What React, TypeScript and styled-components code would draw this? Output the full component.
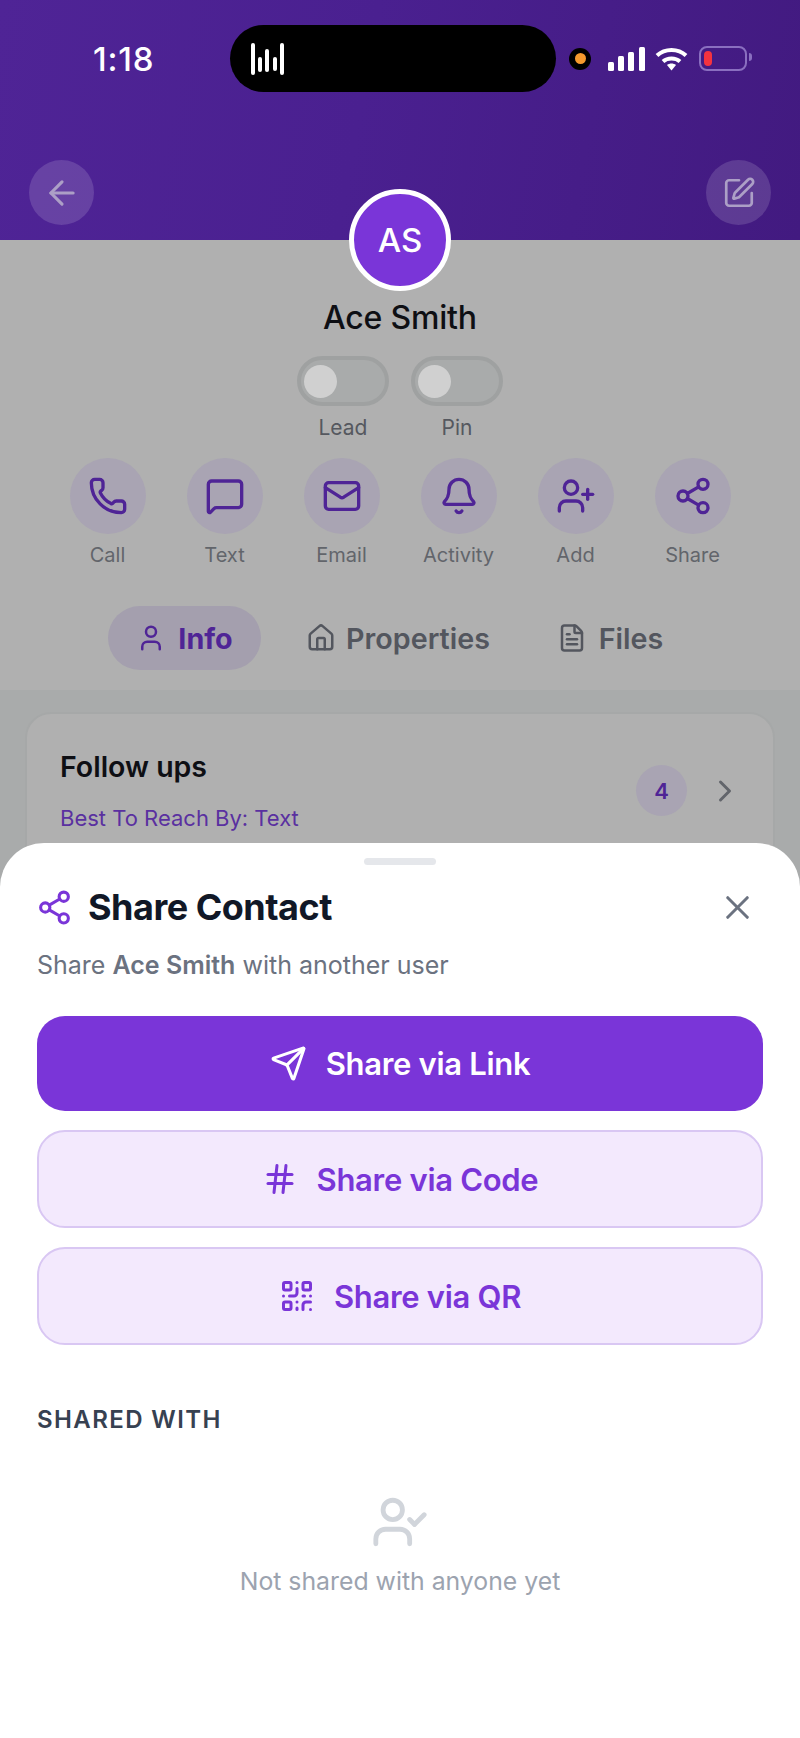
import React from 'react';
import styled, { createGlobalStyle } from 'styled-components';
import {
  ArrowLeft,
  Bell,
  ChevronRight,
  FileText,
  Hash,
  House,
  Mail,
  MessageSquare,
  Phone,
  QrCode,
  Send,
  Share2,
  SquarePen,
  User,
  UserCheck,
  UserPlus,
  X,
} from 'lucide-react';

const GlobalStyle = createGlobalStyle`
  html, body {
    margin: 0;
    padding: 0;
    background: #b0b0b0;
  }
  * {
    box-sizing: border-box;
  }
`;

const Page = styled.div`
  position: relative;
  width: 800px;
  height: 1738px;
  overflow: hidden;
  background: #a9abab;
  font-family: 'Inter', 'Liberation Sans', sans-serif;
`;

const Header = styled.header`
  height: 240px;
  padding: 25px 29px 0;
  background: linear-gradient(100deg, #4f2496 0%, #4a2090 45%, #421a80 100%);
`;

const StatusBar = styled.div`
  display: flex;
  align-items: center;
  height: 67px;
  color: #fff;
`;

const Clock = styled.span`
  width: 201px;
  padding-left: 64px;
  font-size: 33px;
  font-weight: 500;
  letter-spacing: 0.8px;
`;

const Island = styled.div`
  display: flex;
  align-items: center;
  width: 326px;
  height: 67px;
  padding-left: 21px;
  border-radius: 34px;
  background: #000;
`;

const PrivacyDot = styled.span`
  display: flex;
  align-items: center;
  justify-content: center;
  width: 22px;
  height: 22px;
  margin-left: 13px;
  border-radius: 50%;
  background: #000;

  &::after {
    content: '';
    width: 11px;
    height: 11px;
    border-radius: 50%;
    background: #f59a2e;
  }
`;

const SignalIcon = styled.svg`
  margin-left: 17px;
`;

const WifiIcon = styled.svg`
  margin-left: 10px;
`;

const Battery = styled.div`
  position: relative;
  width: 48px;
  height: 25px;
  margin-left: 11px;
  padding: 3px;
  border: 2px solid #8a6fc0;
  border-radius: 8px;

  &::before {
    content: '';
    display: block;
    width: 8px;
    height: 15px;
    border-radius: 4px;
    background: #f5333f;
  }

  &::after {
    content: '';
    position: absolute;
    top: 5px;
    right: -7px;
    width: 3px;
    height: 8px;
    border-radius: 0 3px 3px 0;
    background: #8a6fc0;
  }
`;

const HeaderActions = styled.div`
  display: flex;
  justify-content: space-between;
  margin-top: 68px;
`;

const RoundButton = styled.button`
  display: flex;
  align-items: center;
  justify-content: center;
  width: 65px;
  height: 65px;
  padding: 0;
  border: 0;
  border-radius: 50%;
  background: rgba(255, 255, 255, 0.14);
  color: #ac9fc6;
`;

const Profile = styled.section`
  display: flex;
  flex-direction: column;
  align-items: center;
  height: 452px;
  background: #b0b0b0;
  border-bottom: 2px solid #a9abab;
`;

const Avatar = styled.div`
  display: flex;
  align-items: center;
  justify-content: center;
  width: 102px;
  height: 102px;
  margin-top: -51px;
  border: 5px solid #fff;
  border-radius: 50%;
  background: #7a35d8;
  color: #fff;
  font-size: 33px;
  font-weight: 500;
`;

const Name = styled.h1`
  margin: 7px 0 0;
  font-size: 32px;
  line-height: 40px;
  font-weight: 500;
  letter-spacing: -0.2px;
  color: #0e0f14;
`;

const ToggleRow = styled.div`
  display: flex;
  gap: 22px;
  margin-top: 18px;
`;

const ToggleItem = styled.div`
  display: flex;
  flex-direction: column;
  align-items: center;
`;

const Toggle = styled.div`
  display: flex;
  align-items: center;
  width: 92px;
  height: 50px;
  padding-left: 3px;
  border: 4px solid #9fa1a1;
  border-radius: 25px;
  background: #a9abab;

  &::after {
    content: '';
    width: 33px;
    height: 33px;
    border-radius: 50%;
    background: #d0d0d0;
  }
`;

const ToggleLabel = styled.span`
  margin-top: 9px;
  font-size: 21px;
  line-height: 26px;
  color: #55585f;
`;

const ActionRow = styled.div`
  display: grid;
  grid-template-columns: repeat(6, 76px);
  column-gap: 41px;
  margin-top: 17px;
`;

const Action = styled.div`
  display: flex;
  flex-direction: column;
  align-items: center;
`;

const ActionCircle = styled.div`
  display: flex;
  align-items: center;
  justify-content: center;
  width: 76px;
  height: 76px;
  border-radius: 50%;
  background: #a9a4b3;
  color: #4f2496;
`;

const ActionLabel = styled.span`
  margin-top: 9px;
  font-size: 20px;
  line-height: 24px;
  color: #62656b;
`;

const Tabs = styled.nav`
  display: flex;
  align-items: center;
  align-self: flex-start;
  gap: 24px;
  margin: 39px 0 0 108px;
`;

const Tab = styled.div<{ $active?: boolean; $gap: number; $width: number }>`
  display: flex;
  align-items: center;
  justify-content: center;
  gap: ${({ $gap }) => $gap}px;
  width: ${({ $width }) => $width}px;
  height: 64px;
  border-radius: 32px;
  background: ${({ $active }) => ($active ? '#a49fae' : 'transparent')};
  color: ${({ $active }) => ($active ? '#4f2496' : '#53565e')};
  font-size: 28.7px;
  font-weight: ${({ $active }) => ($active ? 700 : 600)};
`;

const CardArea = styled.div`
  padding: 20px 25px 0;
`;

const Card = styled.article`
  display: flex;
  align-items: flex-start;
  justify-content: space-between;
  height: 200px;
  padding: 35px 30px 0 33px;
  border: 2px solid #a6a8a8;
  border-radius: 26px;
  background: #b0b0b0;
`;

const CardText = styled.div`
  display: flex;
  flex-direction: column;
`;

const CardTitle = styled.span`
  font-size: 28.5px;
  line-height: 36px;
  font-weight: 600;
  color: #0e0f14;
`;

const CardHint = styled.span`
  margin-top: 19px;
  font-size: 22px;
  line-height: 28px;
  color: #5a30a0;
`;

const CardMeta = styled.div`
  display: flex;
  align-items: center;
  gap: 20px;
  margin-top: 16px;
  color: #62656b;
`;

const CountBadge = styled.span`
  display: flex;
  align-items: center;
  justify-content: center;
  width: 51px;
  height: 51px;
  border-radius: 50%;
  background: #a9a4b3;
  color: #4f2496;
  font-size: 22px;
  font-weight: 600;
`;

const Sheet = styled.section`
  position: absolute;
  top: 843px;
  left: 0;
  right: 0;
  bottom: 0;
  padding: 15px 37px 0;
  border-radius: 44px 44px 0 0;
  background: #fff;
`;

const Handle = styled.div`
  width: 72px;
  height: 7px;
  margin: 0 auto;
  border-radius: 4px;
  background: #e5e7eb;
`;

const SheetHeader = styled.div`
  display: flex;
  align-items: center;
  margin-top: 20px;
  height: 44px;
`;

const SheetIcon = styled.span`
  display: flex;
  margin-left: -1px;
  color: #7a35d8;
`;

const SheetTitle = styled.h2`
  flex: 1;
  margin: 0 0 0 15px;
  font-size: 36px;
  font-weight: 700;
  letter-spacing: -0.5px;
  color: #111827;
`;

const CloseButton = styled.button`
  display: flex;
  margin-right: 6px;
  padding: 0;
  border: 0;
  background: none;
  color: #6b7280;
`;

const Subtitle = styled.p`
  margin: 19px 0 0;
  font-size: 25px;
  line-height: 34px;
  color: #6b7280;

  strong {
    font-weight: 600;
  }
`;

const ButtonStack = styled.div`
  display: flex;
  flex-direction: column;
  gap: 19px;
  margin-top: 34px;
`;

const ShareButton = styled.button<{ $primary?: boolean }>`
  display: flex;
  align-items: center;
  justify-content: center;
  gap: 19px;
  width: 100%;
  height: ${({ $primary }) => ($primary ? 95 : 98)}px;
  border: ${({ $primary }) => ($primary ? '0' : '2px solid #d9c7f3')};
  border-radius: 28px;
  background: ${({ $primary }) => ($primary ? '#7a35d8' : '#f3e9fd')};
  color: ${({ $primary }) => ($primary ? '#fff' : '#7a35d8')};
  font-family: inherit;
  font-size: 31px;
  font-weight: 600;
  letter-spacing: -0.3px;
`;

const SectionLabel = styled.h3`
  margin: 60px 0 0;
  font-size: 24px;
  line-height: 30px;
  font-weight: 600;
  letter-spacing: 1.4px;
  color: #374151;
`;

const EmptyState = styled.div`
  display: flex;
  flex-direction: column;
  align-items: center;
  margin-top: 58px;
  color: #d1d5db;
`;

const EmptyText = styled.span`
  margin-top: 14px;
  font-size: 24.8px;
  line-height: 32px;
  color: #9ca3af;
`;

const actions = [
  { label: 'Call', Icon: Phone },
  { label: 'Text', Icon: MessageSquare },
  { label: 'Email', Icon: Mail },
  { label: 'Activity', Icon: Bell },
  { label: 'Add', Icon: UserPlus },
  { label: 'Share', Icon: Share2 },
];

const App = () => (
  <Page>
    <GlobalStyle />
    <Header>
      <StatusBar>
        <Clock>1:18</Clock>
        <Island>
          <svg width="36" height="32" viewBox="0 0 36 32" fill="#fff">
            <rect x="0" y="0" width="4" height="32" rx="2" />
            <rect x="7" y="14" width="4" height="15" rx="2" />
            <rect x="14" y="6" width="4" height="23" rx="2" />
            <rect x="22" y="14" width="4" height="14" rx="2" />
            <rect x="29" y="0" width="4" height="32" rx="2" />
          </svg>
        </Island>
        <PrivacyDot />
        <SignalIcon width="37" height="24" viewBox="0 0 37 24" fill="#fff">
          <rect x="0" y="15" width="6" height="9" rx="1.5" />
          <rect x="10" y="9" width="6" height="15" rx="1.5" />
          <rect x="20" y="5" width="6" height="19" rx="1.5" />
          <rect x="31" y="0" width="6" height="24" rx="1.5" />
        </SignalIcon>
        <WifiIcon width="33" height="24" viewBox="0 0 33 24" fill="none" stroke="#fff" strokeWidth="4">
          <path d="M2 8.500C10 1 23 1 31 8.500" />
          <path d="M8 14.500C12.500 10.500 20.500 10.500 25 14.500" />
          <path d="M12 18 16.500 23.500 21 18C18.500 16 14.500 16 12 18Z" fill="#fff" stroke="none" />
        </WifiIcon>
        <Battery />
      </StatusBar>
      <HeaderActions>
        <RoundButton aria-label="Back">
          <ArrowLeft size={38} strokeWidth={2} />
        </RoundButton>
        <RoundButton aria-label="Edit">
          <SquarePen size={34} strokeWidth={1.9} />
        </RoundButton>
      </HeaderActions>
    </Header>

    <Profile>
      <Avatar>AS</Avatar>
      <Name>Ace Smith</Name>
      <ToggleRow>
        <ToggleItem>
          <Toggle />
          <ToggleLabel>Lead</ToggleLabel>
        </ToggleItem>
        <ToggleItem>
          <Toggle />
          <ToggleLabel>Pin</ToggleLabel>
        </ToggleItem>
      </ToggleRow>
      <ActionRow>
        {actions.map(({ label, Icon }) => (
          <Action key={label}>
            <ActionCircle>
              <Icon size={40} strokeWidth={2} />
            </ActionCircle>
            <ActionLabel>{label}</ActionLabel>
          </Action>
        ))}
      </ActionRow>
      <Tabs>
        <Tab $active $gap={12} $width={153}>
          <User size={30} strokeWidth={2} />
          Info
        </Tab>
        <Tab $gap={10} $width={226}>
          <House size={30} strokeWidth={2} />
          Properties
        </Tab>
        <Tab $gap={12} $width={150}>
          <FileText size={30} strokeWidth={2} />
          Files
        </Tab>
      </Tabs>
    </Profile>

    <CardArea>
      <Card>
        <CardText>
          <CardTitle>Follow ups</CardTitle>
          <CardHint>Best To Reach By: Text</CardHint>
        </CardText>
        <CardMeta>
          <CountBadge>4</CountBadge>
          <ChevronRight size={36} strokeWidth={2} />
        </CardMeta>
      </Card>
    </CardArea>

    <Sheet>
      <Handle />
      <SheetHeader>
        <SheetIcon>
          <Share2 size={37} strokeWidth={2} />
        </SheetIcon>
        <SheetTitle>Share Contact</SheetTitle>
        <CloseButton aria-label="Close">
          <X size={39} strokeWidth={1.9} />
        </CloseButton>
      </SheetHeader>
      <Subtitle>
        Share <strong>Ace Smith</strong> with another user
      </Subtitle>
      <ButtonStack>
        <ShareButton $primary>
          <Send size={37} strokeWidth={2} />
          Share via Link
        </ShareButton>
        <ShareButton>
          <Hash size={36} strokeWidth={2} />
          Share via Code
        </ShareButton>
        <ShareButton>
          <QrCode size={36} strokeWidth={2} />
          Share via QR
        </ShareButton>
      </ButtonStack>
      <SectionLabel>SHARED WITH</SectionLabel>
      <EmptyState>
        <UserCheck size={58} strokeWidth={2} />
        <EmptyText>Not shared with anyone yet</EmptyText>
      </EmptyState>
    </Sheet>
  </Page>
);

export default App;
